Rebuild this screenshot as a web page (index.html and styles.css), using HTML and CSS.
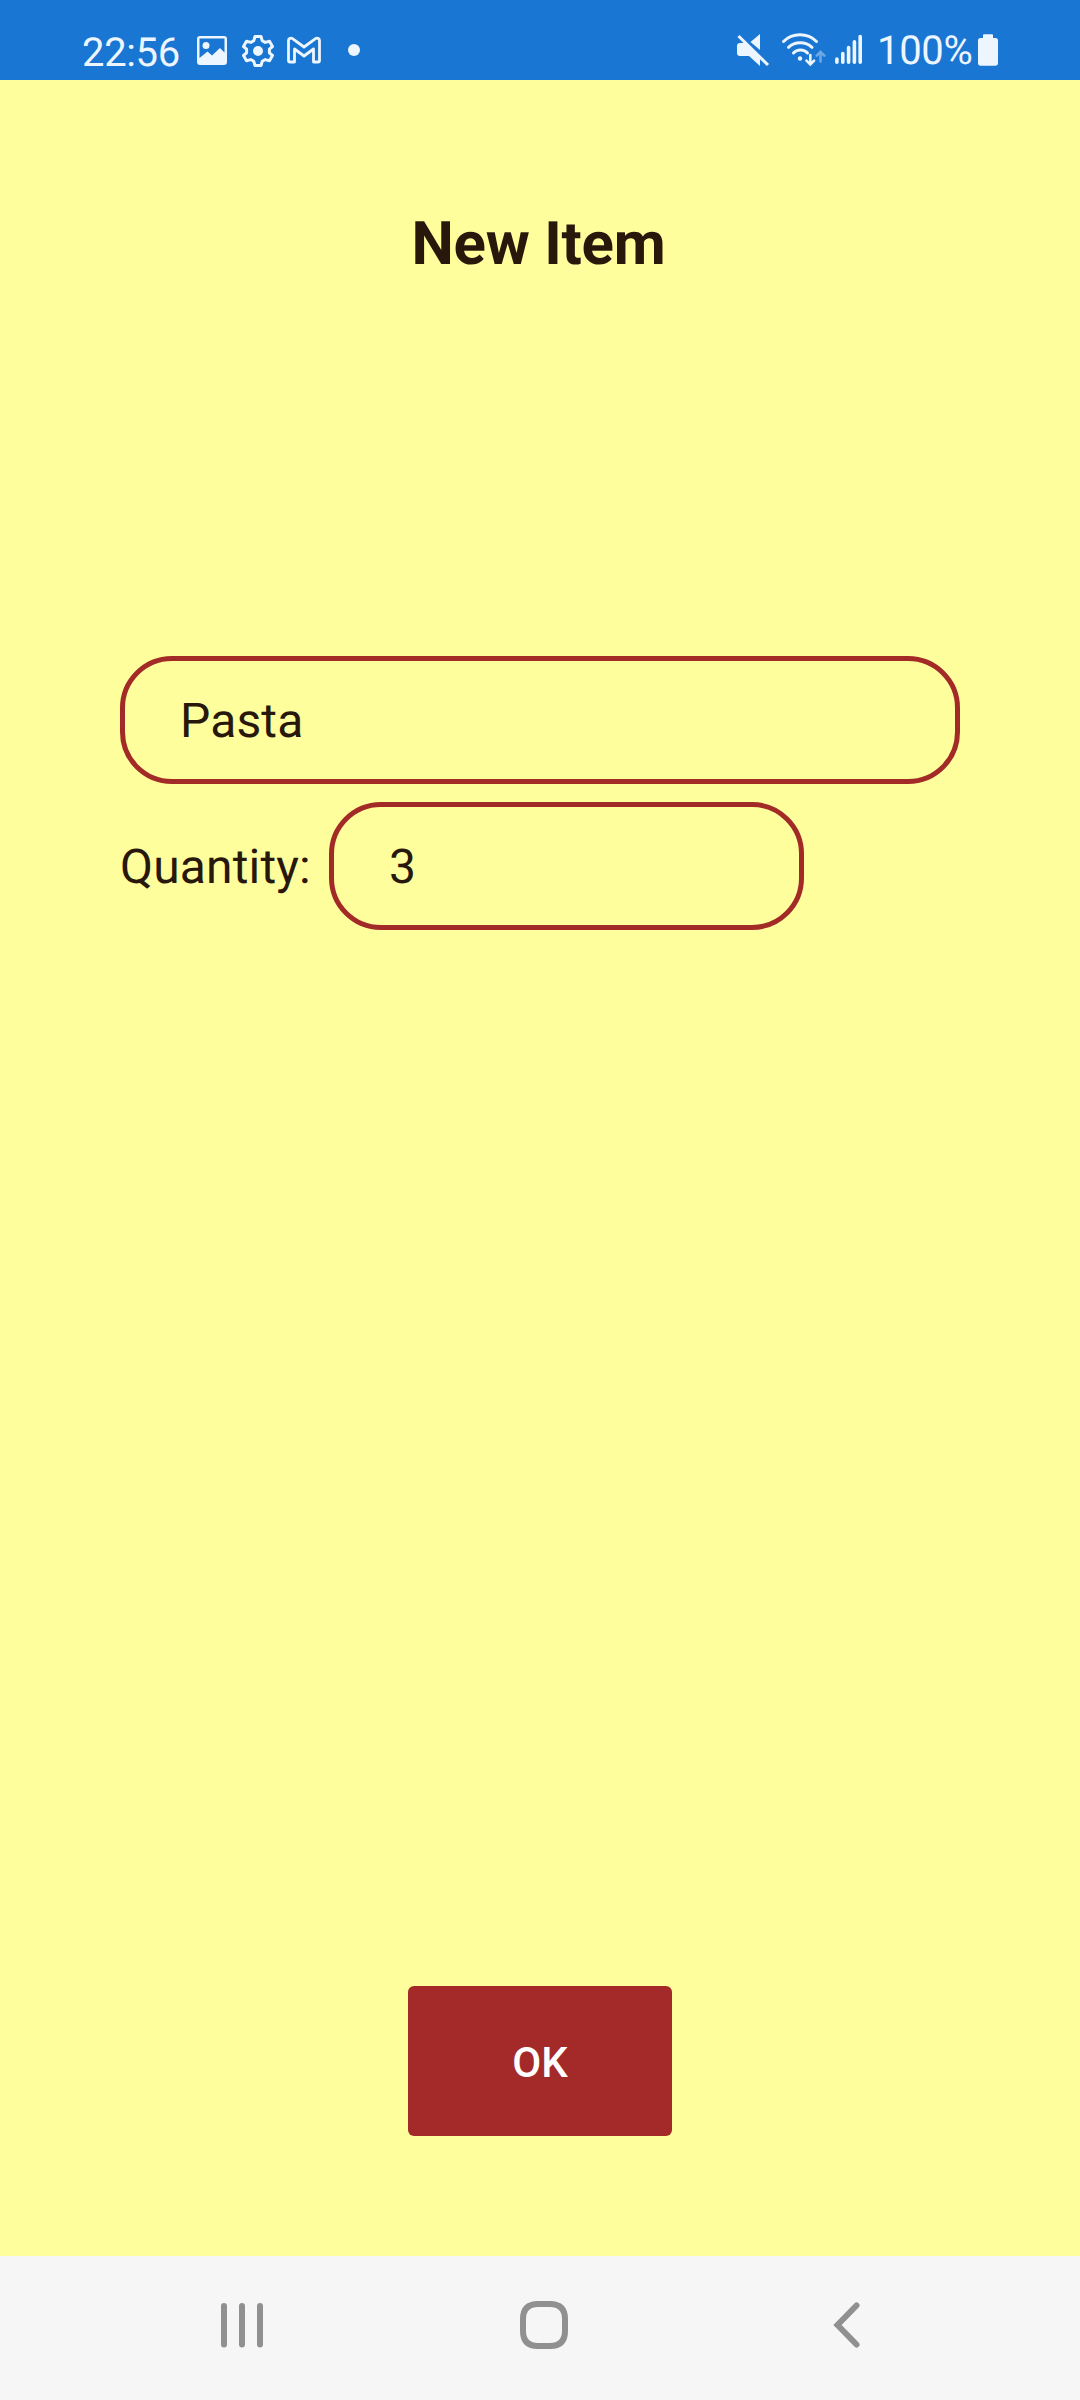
FILE: index.html
```html
<!DOCTYPE html>
<html lang="en">
<head>
<meta charset="utf-8">
<title>New Item</title>
<link rel="stylesheet" href="styles.css">
</head>
<body>
<header class="status">
  <div class="status-group">
    <span class="time">22:56</span>
    <svg width="42" height="80" viewBox="194 0 42 80">
      <path fill="currentColor" fill-rule="evenodd" d="M200 36h24a3 3 0 0 1 3 3v23a3 3 0 0 1-3 3h-24a3 3 0 0 1-3-3V39a3 3 0 0 1 3-3zM199.500 38.500V58l8-6.500 4.500 4 8-7.500 4.500 4.500V38.500z"/>
      <circle cx="206" cy="45.500" r="3.500" fill="currentColor"/>
    </svg>
    <svg width="44" height="80" viewBox="236 0 44 80">
      <path fill="none" stroke="currentColor" stroke-width="3" stroke-linejoin="round" d="M255 36.500h6l1.200 4.200 3 1.700 4.300-1.100 3 5.200-3.100 2.700v3.600l3.100 2.700-3 5.200-4.300-1.100-3 1.700-1.200 4.200h-6l-1.200-4.200-3-1.700-4.300 1.100-3-5.200 3.100-2.700v-3.600l-3.100-2.700 3-5.200 4.300 1.100 3-1.700z"/>
      <circle cx="258" cy="51" r="5" fill="currentColor"/>
    </svg>
    <svg width="52" height="80" viewBox="280 0 52 80">
      <path fill="none" stroke="currentColor" stroke-width="2.800" stroke-linejoin="round" d="M288.500 40.500c0-2 2.500-3 4-1.800L304 47l11.500-8.300c1.500-1.200 4-.2 4 1.800V60.500q0 1.500-1.500 1.500h-4.500V49L304 56l-9.500-7V62H290q-1.500 0-1.500-1.500z"/>
    </svg>
    <svg width="30" height="80" viewBox="339 0 30 80">
      <circle cx="361" cy="50" r="6" fill="currentColor"/>
    </svg>
  </div>
  <div class="status-group">
    <svg width="46" height="80" viewBox="732 0 46 80">
      <path fill="currentColor" d="M740 43h6l14 14v9l-11-10h-9q-3 0-3-3v-7q0-3 3-3zM760 34v16l-9.500-8z"/>
      <path stroke="currentColor" stroke-width="3" d="M738.500 36l29.500 29"/>
    </svg>
    <svg width="52" height="80" viewBox="778 0 52 80">
      <g fill="none" stroke="currentColor" stroke-width="3" stroke-linecap="round">
        <path d="M783.500 41.500c9-9 24-9 33 0M788.500 47.300c6.500-6 17-6 23.500 0M793.500 53c3.500-4 10.500-4 14 0"/>
        <path stroke-width="2.600" d="M810.300 55v9.300m-3.800-3.600l3.800 3.800 3.800-3.800"/>
        <path stroke-width="2.600" opacity=".4" d="M820.500 61.500V52m-3.800 3.600l3.800-3.800 3.800 3.800"/>
      </g>
      <circle cx="800" cy="58.500" r="2.200" fill="currentColor"/>
    </svg>
    <svg width="46" height="80" viewBox="830 0 46 80">
      <path stroke="currentColor" stroke-width="3.600" stroke-linecap="round" d="M836.900 59v3.300M842.800 53.500v8.800M848.600 47.500v14.800M854.400 41.700v20.600M860.200 36.500v25.800"/>
    </svg>
    <span class="percent">100%</span>
    <svg width="26" height="80" viewBox="975 0 26 80">
      <path fill="currentColor" d="M984 34.300h8q1 0 1 1V38h2.500q2.500 0 2.500 2.500V63q0 2.800-2.800 2.800h-14.400q-2.800 0-2.800-2.800V40.500q0-2.500 2.500-2.500h2.500v-2.700q0-1 1-1z"/>
    </svg>
  </div>
</header>
<main class="screen">
  <h1 class="title">New Item</h1>
  <form class="form">
    <div class="field">Pasta</div>
    <div class="row">
      <span class="label">Quantity:</span>
      <div class="field field-qty">3</div>
    </div>
  </form>
  <button class="ok" type="button">OK</button>
</main>
<nav class="nav">
  <svg width="48" height="52" viewBox="0 0 48 52"><path stroke="currentColor" stroke-width="6" stroke-linecap="round" d="M6 6v38.500M24 6v38.500M42 6v38.500"/></svg>
  <svg class="home" width="52" height="52" viewBox="0 0 52 52"><path fill="none" stroke="currentColor" stroke-width="6" d="M20 4H32Q47 4 47 19V31Q47 46 32 46H20Q5 46 5 31V19Q5 4 20 4z"/></svg>
  <svg width="30" height="52" viewBox="0 0 30 52"><path fill="none" stroke="currentColor" stroke-width="6" stroke-linecap="round" d="M24.500 5.500L5.500 25 24.500 44.500"/></svg>
</nav>
</body>
</html>
```
FILE: styles.css
```css
* { box-sizing: border-box; }
body {
  margin: 0;
  height: 2400px;
  display: flex;
  flex-direction: column;
  font-family: Roboto, sans-serif;
  text-rendering: geometricPrecision;
  color: #28180c;
  background: #fffe9c;
}
svg { display: block; flex: none; }
.status {
  height: 80px;
  padding: 0 79px 0 82px;
  display: flex;
  justify-content: space-between;
  background: #1976d2;
  color: #edf5ff;
  font-size: 40px;
  letter-spacing: -0.35px;
}
.status-group { display: flex; }
.time { width: 112px; line-height: 105px; height: 80px; }
.percent { width: 99px; padding-left: 1px; line-height: 101px; height: 80px; }
.screen {
  flex: 1;
  display: flex;
  flex-direction: column;
  align-items: center;
  padding-bottom: 120px;
}
.title {
  margin: 128px 0 0;
  padding-right: 3px;
  font-size: 60px;
  font-weight: 700;
  line-height: 72px;
  letter-spacing: -0.25px;
}
.form {
  width: 840px;
  margin-top: 376px;
  display: flex;
  flex-direction: column;
  gap: 18px;
  font-size: 48px;
  letter-spacing: 0.15px;
}
.field {
  height: 128px;
  padding: 1px 55px 0;
  border: 5px solid #a22b28;
  border-radius: 52px;
  line-height: 118px;
}
.row { display: flex; align-items: center; }
.label { width: 209px; padding-top: 1px; }
.field-qty { width: 475px; }
.ok {
  width: 264px;
  height: 150px;
  margin-top: auto;
  padding: 3px 0 0;
  border: 0;
  border-radius: 6px;
  background: #a42a2a;
  color: #fff;
  font: 500 42px Roboto, sans-serif;
}
.nav {
  height: 144px;
  padding: 0 218px 4px;
  display: flex;
  align-items: center;
  justify-content: space-between;
  background: #f6f6f6;
  color: #909090;
}
.home { margin-right: 10px; }
```
